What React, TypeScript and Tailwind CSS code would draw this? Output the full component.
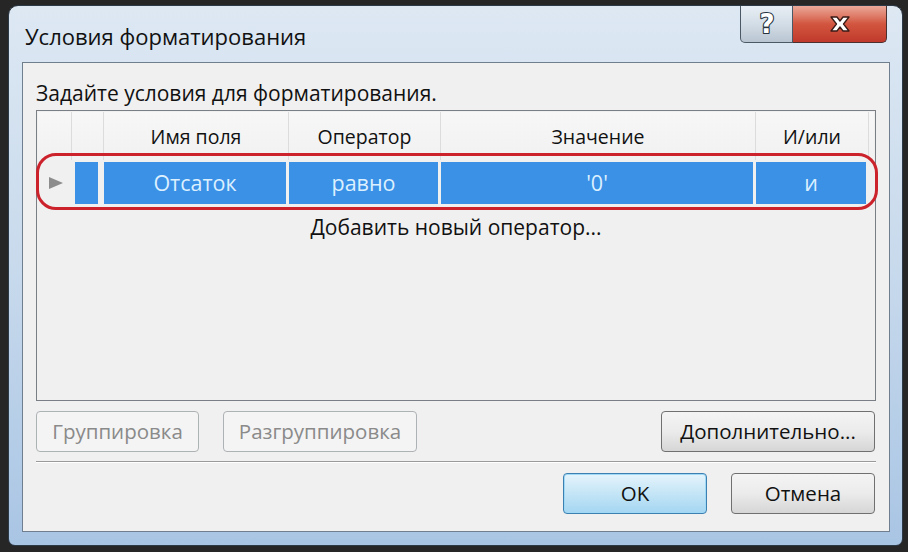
import React from "react";

const ui = { fontFamily: '"Open Sans", "Noto Sans", sans-serif' };

const cols = [
  { w: "w-[185px]", head: "Имя поля", val: "Отсаток" },
  { w: "w-[152px]", head: "Оператор", val: "равно" },
  { w: "w-[315px]", head: "Значение", val: "'0'" },
  { w: "w-[113px]", head: "И/или", val: "и" },
];

const Button = ({
  children,
  w,
  disabled,
  primary,
}: {
  children: React.ReactNode;
  w: string;
  disabled?: boolean;
  primary?: boolean;
}) => {
  let cls =
    "border-[#707070] bg-gradient-to-b from-[#f4f4f4] via-[#ebebeb] to-[#d6d6d6] text-[#111]";
  if (disabled) cls = "border-[#adb2b5] bg-[#f4f4f4] text-[#8a8a8a]";
  if (primary)
    cls =
      "border-[#3c7fb1] bg-gradient-to-b from-[#e5f4fc] via-[#c4e5f6] to-[#a4d6f2] text-[#111] shadow-[inset_0_0_0_1px_#9fd9f5]";
  return (
    <div
      className={`${w} h-[41px] rounded-[4px] border flex items-center justify-center text-[20.5px] ${cls}`}
    >
      {children}
    </div>
  );
};

export default function App() {
  return (
    <div className="w-[908px] h-[552px] bg-[#262626] overflow-hidden pt-[5px]" style={ui}>
      <div className="ml-[8px] w-[895px] h-[541px] rounded-t-[10px] rounded-b-[7px] border border-[#2c3947] bg-gradient-to-b from-[#dde8f3] via-[#c7d9ec] to-[#a9c5e4] px-[13px] flex flex-col">
        {/* title bar */}
        <div className="h-[56px] flex items-start">
          <div className="pt-[16px] pl-[3px] text-[22px] text-[#111] leading-[28px]">
            Условия форматирования
          </div>
          <div className="ml-auto mr-[2px] flex">
            <div className="w-[53px] h-[37px] rounded-bl-[5px] border border-t-0 border-[#4b5866] bg-gradient-to-b from-[#e8eef4] via-[#d3dde7] to-[#b9c5d1] flex items-center justify-center">
              <svg width="24" height="28" viewBox="0 0 24 28">
                <text
                  x="12"
                  y="23"
                  textAnchor="middle"
                  fontSize="26"
                  fontWeight="800"
                  fontFamily='"DejaVu Sans", sans-serif'
                  fill="#fff"
                  stroke="#26323e"
                  strokeWidth="2.2"
                  paintOrder="stroke"
                  strokeLinejoin="round"
                >
                  ?
                </text>
              </svg>
            </div>
            <div className="w-[94px] h-[37px] rounded-br-[5px] border border-l-0 border-t-0 border-[#4b3030] bg-gradient-to-b from-[#eaa899] via-[#d2553f] to-[#c0392b] flex items-center justify-center">
              <svg width="28" height="20" viewBox="0 0 28 20">
                <path
                  d="M5 3 L11 3 L14 7 L17 3 L23 3 L17.5 10 L23 17 L17 17 L14 13 L11 17 L5 17 L10.5 10 Z"
                  fill="#fff"
                  stroke="#3a1a16"
                  strokeWidth="1.3"
                  strokeLinejoin="round"
                />
              </svg>
            </div>
          </div>
        </div>
        {/* client area */}
        <div className="w-[868px] h-[470px] border border-[#6f7f90] bg-[#f0f0f0] px-[13px] flex flex-col">
          <div className="pt-[17px] h-[47px] text-[21px] leading-[26px] text-[#111]">
            Задайте условия для форматирования.
          </div>
          <div className="relative w-[840px] h-[291px] border border-[#7a7f85] bg-[#f0f0f0] p-[1px]">
            {/* header */}
            <div className="flex h-[48px] bg-gradient-to-b from-[#f7f7f7] to-[#f1f1f1] text-[19.5px] text-[#111]">
              <div className="w-[34px] border-r border-[#dcdcdc]" />
              <div className="w-[32px] border-r border-[#dcdcdc]" />
              {cols.map((c) => (
                <div
                  key={c.head}
                  className={`${c.w} border-r border-[#dcdcdc] flex items-center justify-center pt-[2px]`}
                >
                  {c.head}
                </div>
              ))}
            </div>
            {/* selected row */}
            <div className="flex h-[46px] items-stretch py-[2px] bg-[#f0f0f0]">
              <div className="w-[34px] flex items-center justify-center pl-[2px]">
                <svg width="16" height="14" viewBox="0 0 16 14">
                  <path d="M1 1 L15 7 L1 13 Z" fill="#8c8c8c" />
                </svg>
              </div>
              <div className="w-[32px] flex pl-[3px] pr-[6px]">
                <div className="flex-1 bg-[#3b91e6]" />
              </div>
              {cols.map((c) => (
                <div key={c.head} className={`${c.w} flex pr-[3px]`}>
                  <div className="flex-1 bg-[#3b91e6] flex items-center justify-center text-[21.5px] text-[#dcf0ff]">
                    {c.val}
                  </div>
                </div>
              ))}
            </div>
            <div className="flex justify-center pt-[8px] text-[21px] text-[#111] leading-[26px]">
              Добавить новый оператор...
            </div>
            {/* red annotation */}
            <div className="absolute left-[-1px] top-[42px] w-[842px] h-[57px] rounded-[20px] border-[3px] border-[#cc222c]" />
          </div>
          <div className="flex mt-[10px] gap-[24px]">
            <Button w="w-[163px]" disabled>
              Группировка
            </Button>
            <Button w="w-[194px]" disabled>
              Разгруппировка
            </Button>
            <div className="ml-auto mr-[1px]">
              <Button w="w-[214px]">Дополнительно...</Button>
            </div>
          </div>
          <div className="mt-[9px] w-[840px] h-[2px] border-t border-[#9a9a9a] border-b-white border-b" />
          <div className="flex mt-[10px] gap-[24px] justify-end pr-[1px]">
            <Button w="w-[144px]" primary>
              OK
            </Button>
            <Button w="w-[144px]">Отмена</Button>
          </div>
        </div>
      </div>
    </div>
  );
}
